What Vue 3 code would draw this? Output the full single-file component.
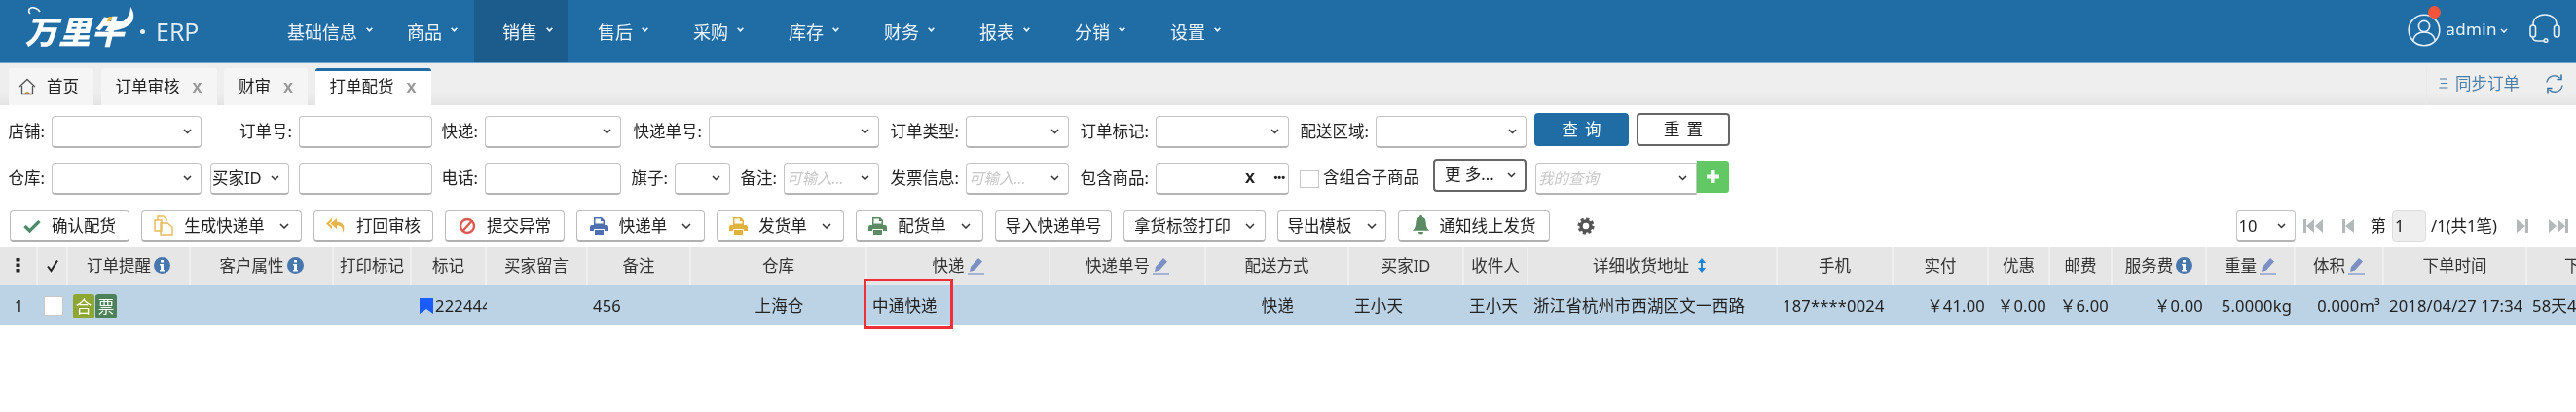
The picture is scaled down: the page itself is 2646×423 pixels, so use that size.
<script setup>
import { computed } from 'vue'

const YEN = '\uFFE5'
const navItems = [
  { t: '基础信息', w: 121 }, { t: '商品', w: 96 }, { t: '销售', w: 96, active: true }, { t: '售后', w: 96 },
  { t: '采购', w: 96 }, { t: '库存', w: 96 }, { t: '财务', w: 96 }, { t: '报表', w: 96 }, { t: '分销', w: 96 }, { t: '设置', w: 96 }
]
const tabs = [
  { t: '订单审核' }, { t: '财审' }, { t: '打单配货', active: true }
]
const row1 = [
  { label: '店铺', lw: 53, w: 154, kind: 'select' },
  { label: '订单号', lw: 100, w: 137, kind: 'input' },
  { label: '快递', lw: 54, w: 140, kind: 'select' },
  { label: '快递单号', lw: 90, w: 175, kind: 'select' },
  { label: '订单类型', lw: 89, w: 106, kind: 'select' },
  { label: '订单标记', lw: 89, w: 137, kind: 'select' },
  { label: '配送区域', lw: 89, w: 155, kind: 'select' }
]
const row2 = [
  { label: '仓库', lw: 53, w: 154, kind: 'select' },
  { label: '', lw: 9, w: 81, kind: 'select', value: '买家ID' },
  { label: '', lw: 10, w: 137, kind: 'input' },
  { label: '电话', lw: 54, w: 140, kind: 'input' },
  { label: '旗子', lw: 55, w: 57, kind: 'select' },
  { label: '备注', lw: 55, w: 98, kind: 'select', ph: '可输入...' },
  { label: '发票信息', lw: 89, w: 106, kind: 'select', ph: '可输入...' },
  { label: '包含商品', lw: 89, w: 137, kind: 'input', picker: true }
]
const tools = [
  { t: '确认配货', w: 123, icon: 'check' },
  { t: '生成快递单', w: 165, icon: 'copy', caret: true },
  { t: '打回审核', w: 123, icon: 'reply' },
  { t: '提交异常', w: 123, icon: 'ban' },
  { t: '快递单', w: 132, icon: 'print', color: '#4f6fb0', caret: true },
  { t: '发货单', w: 131, icon: 'print', color: '#e2b23f', caret: true },
  { t: '配货单', w: 131, icon: 'print', color: '#5b8a63', caret: true },
  { t: '导入快递单号', w: 120 },
  { t: '拿货标签打印', w: 146, caret: true },
  { t: '导出模板', w: 112, caret: true },
  { t: '通知线上发货', w: 156, icon: 'bell' }
]
const columns = [
  { t: 'dots', end: 39, kind: 'index' },
  { t: 'check', end: 70, kind: 'box' },
  { t: '订单提醒', end: 196, icon: 'info', kind: 'badges' },
  { t: '客户属性', end: 343, icon: 'info' },
  { t: '打印标记', end: 423 },
  { t: '标记', end: 500, kind: 'mark', v: '222444' },
  { t: '买家留言', end: 604 },
  { t: '备注', end: 710, v: '456', a: 'left' },
  { t: '仓库', end: 891, v: '上海仓', a: 'center' },
  { t: '快递', end: 1079, icon: 'pen', v: '中通快递', a: 'left' },
  { t: '快递单号', end: 1239, icon: 'pen' },
  { t: '配送方式', end: 1386, v: '快递', a: 'center' },
  { t: '买家ID', end: 1504, v: '王小天', a: 'left' },
  { t: '收件人', end: 1570, v: '王小天', a: 'left' },
  { t: '详细收货地址', end: 1826, icon: 'sort', v: '浙江省杭州市西湖区文一西路', a: 'left' },
  { t: '手机', end: 1945, v: '187****0024', a: 'left' },
  { t: '实付', end: 2043, v: YEN + '41.00', a: 'right' },
  { t: '优惠', end: 2106, v: YEN + '0.00', a: 'right' },
  { t: '邮费', end: 2170, v: YEN + '6.00', a: 'right' },
  { t: '服务费', end: 2267, icon: 'info', v: YEN + '0.00', a: 'right' },
  { t: '重量', end: 2358, icon: 'pen', v: '5.0000kg', a: 'right' },
  { t: '体积', end: 2449, icon: 'pen', v: '0.000m³', a: 'right' },
  { t: '下单时间', end: 2596, v: '2018/04/27 17:34', a: 'left' },
  { t: '下单间隔', end: 2740, v: '58天4小时', a: 'left' }
]
const gridCols = computed(() => {
  let prev = 0
  return columns.map(c => { const w = c.end - prev; prev = c.end; return w + 'px' }).join(' ')
})
</script>

<template>
  <div class="page">
    <header class="top">
      <div class="logo">
        <svg class="logo-art" viewBox="0 0 140 46" width="140" height="46">
          <path d="M31 14c-2-2-2-5 1-6 3-1 7 1 9 4" fill="none" stroke="#fff" stroke-width="1.6" />
          <path d="M108 32c14 0 27-4 29-13 1-5-1-9-3-12 0 7-3 14-12 17l-11 3z" fill="#fff" />
          <path d="M107 22l5-5h6l-5 5z" fill="#e8b23c" />
        </svg>
        <span class="logo-cn">万里牛</span>
        <span class="logo-dot"></span>
        <span class="logo-erp">ERP</span>
      </div>
      <nav class="nav">
        <a v-for="n in navItems" :key="n.t" class="nav-item" :class="{ on: n.active }" :style="{ width: n.w + 'px' }">
          {{ n.t }}
          <svg class="nav-caret" width="7" height="5" viewBox="0 0 7 5"><path d="M.7.8 3.5 3.8 6.3.8" fill="none" stroke="#fff" stroke-width="1.5" /></svg>
        </a>
      </nav>
      <div class="user">
        <span class="avatar">
          <svg width="34" height="34" viewBox="0 0 34 34" fill="none" stroke="#e6eff6" stroke-width="1.6">
            <circle cx="17" cy="17" r="15.8" />
            <circle cx="17" cy="13" r="5.6" />
            <path d="M5.5 27.5c1.5-5.5 6-8.5 11.500-8.500s10 3 11.500 8.500" />
          </svg>
          <i class="dot"></i>
        </span>
        <span class="uname">admin</span>
        <svg class="user-caret" width="8" height="5" viewBox="0 0 8 5"><path d="M1 1l3 3 3-3" fill="none" stroke="#fff" stroke-width="1.5" /></svg>
        <svg class="headset" width="34" height="30" viewBox="0 0 34 30" fill="none" stroke="#e6eff6" stroke-width="1.6">
          <path d="M5 12V11C5 5 10 1 17 1s12 4 12 10v1" />
          <rect x="2" y="12" width="5.500" height="12" rx="2.700" />
          <rect x="26.500" y="12" width="5.500" height="12" rx="2.700" />
          <path d="M4.500 24c0 3 2 4 5 4h7" />
          <circle cx="18" cy="27.500" r="1.800" />
        </svg>
      </div>
    </header>

    <div class="tabbar">
      <div class="tab home">
        <svg width="18" height="18" viewBox="0 0 18 18" fill="none" stroke="#555" stroke-width="1.3">
          <path d="M1 9 9 1.500 17 9" />
          <path d="M3.500 8v8.500h11V8" />
          <path d="M7 16.500c0-2 4-2 4 0" stroke="#b57b3e" />
        </svg>
        <span>首页</span>
      </div>
      <div v-for="t in tabs" :key="t.t" class="tab" :class="{ on: t.active }">
        <span>{{ t.t }}</span><b class="close">x</b>
      </div>
      <div class="tab-tools">
        <span class="sync">
          <svg width="10" height="11" viewBox="0 0 10 11" fill="none" stroke="#4c7fa8" stroke-width="1.200"><path d="M1 1h8M2 5.500h6.500M.5 10h9" /></svg>
          同步订单
        </span>
        <svg class="refresh" width="22" height="22" viewBox="0 0 22 22" fill="none" stroke="#4c7fa8" stroke-width="1.500">
          <path d="M3 9.500A8 8 0 0 1 16.500 5" />
          <path d="M19 12.500A8 8 0 0 1 5.500 17" />
          <path d="M18 1.500v5h-4.500" stroke="#2c6ea4" />
          <path d="M4 20.500v-5h4.500" stroke="#2c6ea4" />
        </svg>
      </div>
    </div>

    <section class="filters">
      <div class="frow first">
        <div v-for="f in row1" :key="f.label" class="field">
          <label class="lbl" :style="{ width: f.lw + 'px' }">{{ f.label ? f.label + ':' : '' }}</label>
          <div class="ctrl" :style="{ width: f.w + 'px' }">
            <svg v-if="f.kind === 'select'" class="chev" width="9" height="6" viewBox="0 0 9 6"><path d="M1 1l3.500 3.500L8 1" fill="none" stroke="#333" stroke-width="1.500" /></svg>
          </div>
        </div>
        <button class="act primary">查询</button>
        <button class="act">重置</button>
      </div>
      <div class="frow second">
        <div v-for="(f, i) in row2" :key="i" class="field">
          <label class="lbl" :style="{ width: f.lw + 'px' }">{{ f.label ? f.label + ':' : '' }}</label>
          <div class="ctrl" :style="{ width: f.w + 'px' }">
            <span v-if="f.value" class="val">{{ f.value }}</span>
            <span v-if="f.ph" class="ph">{{ f.ph }}</span>
            <svg v-if="f.kind === 'select'" class="chev" width="9" height="6" viewBox="0 0 9 6"><path d="M1 1l3.500 3.500L8 1" fill="none" stroke="#333" stroke-width="1.500" /></svg>
            <template v-if="f.picker"><b class="pick-x">x</b><b class="pick-more">•••</b></template>
          </div>
        </div>
        <span class="cbox"></span>
        <span class="sub-lbl">含组合子商品</span>
        <div class="more">
          <span>更 多...</span>
          <svg class="chev" width="9" height="6" viewBox="0 0 9 6"><path d="M1 1l3.500 3.500L8 1" fill="none" stroke="#333" stroke-width="1.500" /></svg>
        </div>
        <div class="ctrl query">
          <span class="ph">我的查询</span>
          <svg class="chev" width="9" height="6" viewBox="0 0 9 6"><path d="M1 1l3.500 3.500L8 1" fill="none" stroke="#333" stroke-width="1.500" /></svg>
        </div>
        <button class="plus"><svg width="15" height="15" viewBox="0 0 15 15"><path d="M7.500 1v13M1 7.500h13" stroke="#fff" stroke-width="4" /></svg></button>
      </div>
    </section>

    <section class="toolbar">
      <button v-for="b in tools" :key="b.t" class="tool" :style="{ width: b.w + 'px' }">
        <svg v-if="b.icon === 'check'" width="18" height="14" viewBox="0 0 18 14"><path d="M1.500 7l5 5L16.500 2" fill="none" stroke="#4f8a6b" stroke-width="3.200" /></svg>
        <svg v-if="b.icon === 'copy'" width="20" height="21" viewBox="0 0 20 21" fill="none" stroke="#e6bb5c" stroke-width="1.400"><path d="M1 5h7l0 11H1zM4 5V1h6l3 3v2" /><path d="M7 8h7l5 4v8H7z" /></svg>
        <svg v-if="b.icon === 'reply'" width="20" height="17" viewBox="0 0 20 17" fill="#e6b64c"><path d="M6 1 0 6.500 6 12V9L3 6.500 6 4z" /><path d="M11 1 4.500 6.500 11 12V8.500c4 0 6 1.500 6.500 7.500 2-6 1-11-6.500-11.500z" /></svg>
        <svg v-if="b.icon === 'ban'" width="18" height="18" viewBox="0 0 18 18" fill="none" stroke="#dc5a50" stroke-width="2.400"><circle cx="9" cy="9" r="7" /><path d="M4.500 14 13.500 4" /></svg>
        <svg v-if="b.icon === 'print'" width="19" height="18" viewBox="0 0 19 18" :fill="b.color"><path d="M4 0h8l3 3v5H4zM5.500 1.500v5h8V4h-2.500V1.500z" fill-rule="evenodd" /><path d="M2 8h15a2 2 0 0 1 2 2v4h-4v-2H4v2H0v-4a2 2 0 0 1 2-2z" /><path d="M5 13h9v5H5z" /></svg>
        <svg v-if="b.icon === 'bell'" width="17" height="21" viewBox="0 0 17 21" fill="#5b8a63"><path d="M8.500 0c1 0 1.500.700 1.500 1.700 3 .9 3.500 3.300 3.700 6 .2 3.500 1 5.500 3.300 8H0c2.300-2.500 3.100-4.500 3.300-8 .2-2.700.7-5.100 3.700-6C7 .7 7.500 0 8.500 0z" /><path d="M6 17h5a2.500 2.500 0 0 1-5 0z" /></svg>
        <span>{{ b.t }}</span>
        <svg v-if="b.caret" class="tool-caret" width="10" height="6" viewBox="0 0 10 6"><path d="M1 1l4 4 4-4" fill="none" stroke="#333" stroke-width="1.500" /></svg>
      </button>
      <svg class="gear" width="18" height="18" viewBox="0 0 18 18" fill="none" stroke="#555">
        <circle cx="9" cy="9" r="5" stroke-width="3.500" />
        <circle cx="9" cy="9" r="7.300" stroke-width="2.600" stroke-dasharray="3.200 2.530" />
      </svg>
      <div class="pager">
        <div class="ctrl size"><span class="val">10</span><svg class="chev" width="9" height="6" viewBox="0 0 9 6"><path d="M1 1l3.500 3.500L8 1" fill="none" stroke="#333" stroke-width="1.500" /></svg></div>
        <svg class="pg first-pg" width="20" height="16" viewBox="0 0 20 16" fill="#b3b8b8"><path d="M0 1h3v14H0zM11 1v14L3 8zM20 1v14l-8-7z" /></svg>
        <svg class="pg prev-pg" width="12" height="16" viewBox="0 0 12 16" fill="#b3b8b8"><path d="M0 1h3v14H0zM12 1v14L3 8z" /></svg>
        <span class="pg-t">第</span>
        <span class="pg-in">1</span>
        <span class="pg-total">/1(共1笔)</span>
        <svg class="pg next-pg" width="12" height="16" viewBox="0 0 12 16" fill="#b3b8b8"><path d="M12 1H9v14h3zM0 1v14l9-7z" /></svg>
        <svg class="pg last-pg" width="20" height="16" viewBox="0 0 20 16" fill="#b3b8b8"><path d="M20 1h-3v14h3zM9 1v14l8-7zM0 1v14l8-7z" /></svg>
      </div>
    </section>

    <section class="table">
      <div class="thead" :style="{ gridTemplateColumns: gridCols }">
        <div v-for="c in columns" :key="c.t" class="th">
          <svg v-if="c.t === 'dots'" width="5" height="15" viewBox="0 0 5 15" fill="#222"><rect x="0.500" y="0" width="4" height="3.500" /><rect x="0.500" y="5.500" width="4" height="3.500" /><rect x="0.500" y="11" width="4" height="3.500" /></svg>
          <svg v-else-if="c.t === 'check'" width="14" height="14" viewBox="0 0 14 14"><path d="M2 7.500 5.500 12 12 1.500" fill="none" stroke="#222" stroke-width="2" /></svg>
          <template v-else>
            <span>{{ c.t }}</span>
            <svg v-if="c.icon === 'info'" class="ic" width="17" height="17" viewBox="0 0 17 17"><circle cx="8.500" cy="8.500" r="8.500" fill="#4877ad" /><rect x="7" y="3" width="3" height="2.500" fill="#fff" /><path d="M6 7h4v6h1v1.500H6V13h1V8.500H6z" fill="#fff" /></svg>
            <svg v-if="c.icon === 'pen'" class="ic" width="17" height="18" viewBox="0 0 17 18"><path d="M11 1l4 3.500-8 9-5 1.500 1-5z" fill="#7a8fc4" /><path d="M0 17h17" stroke="#8aa0d0" stroke-width="1.500" /></svg>
            <svg v-if="c.icon === 'sort'" class="ic sort" width="8" height="15" viewBox="0 0 8 15" fill="#1f84d6"><path d="M4 0l4 5H5v5h3l-4 5-4-5h3V5H0z" /></svg>
          </template>
        </div>
      </div>
      <div class="trow" :style="{ gridTemplateColumns: gridCols }">
        <div v-for="c in columns" :key="c.t" class="td" :class="c.a">
          <span v-if="c.kind === 'index'">1</span>
          <span v-else-if="c.kind === 'box'" class="rowbox"></span>
          <template v-else-if="c.kind === 'badges'">
            <span class="badge he">合</span><span class="badge piao">票</span>
          </template>
          <template v-else-if="c.kind === 'mark'">
            <svg class="mark" width="14" height="16" viewBox="0 0 14 16" fill="#1a5cff"><path d="M0 0h14v16l-7-5-7 5z" /></svg>
            <span class="mark-v">{{ c.v }}</span>
          </template>
          <span v-else-if="c.v">{{ c.v }}</span>
        </div>
      </div>
      <div class="hilite"></div>
    </section>
  </div>
</template>

<style scoped>
.page {
  width: 2646px;
  height: 423px;
  overflow: hidden;
  background: #fff;
  color: #222;
  font: 16.500px/1.2 "Noto Sans", "Noto Sans CJK SC", sans-serif;
  filter: blur(0.35px);
}
.top {
  height: 65px;
  background: #206ca4;
  border-bottom: 1px solid #6ea3c9;
  box-sizing: border-box;
  display: flex;
  color: #eef4f9;
}
.logo {
  width: 266px;
  flex: none;
  position: relative;
  display: flex;
}
.logo-art { position: absolute; left: 0; top: 0; }
.logo-cn {
  position: absolute;
  left: 26px;
  top: 11px;
  font-size: 33px;
  line-height: 40px;
  font-weight: 900;
  font-style: italic;
  color: #fff;
  letter-spacing: 1px;
  font-family: "Noto Sans CJK SC", sans-serif;
  white-space: nowrap;
}
.logo-dot {
  position: absolute;
  left: 144px;
  top: 30px;
  width: 5px;
  height: 5px;
  border-radius: 50%;
  background: #e8f0f6;
}
.logo-erp {
  position: absolute;
  left: 160px;
  top: 14px;
  font: 25px/36px "Open Sans", sans-serif;
  color: #e3edf5;
}
.nav { display: flex; }
.nav-item {
  box-sizing: border-box;
  height: 64px;
  margin-right: 2px;
  padding: 22px 0 0 29px;
  font-size: 18px;
  line-height: 22px;
  white-space: nowrap;
}
.nav-item.on { background: #1c5c8d; }
.nav-caret { margin: 0 0 10px 4px; vertical-align: middle; }
.user {
  margin-left: auto;
  display: flex;
  align-items: center;
  height: 64px;
  padding-right: 15px;
}
.avatar { position: relative; display: block; width: 34px; height: 34px; margin-right: 5px; margin-top: -3px; }
.avatar svg { display: block; }
.dot {
  position: absolute;
  left: 21px;
  top: -8px;
  width: 13px;
  height: 13px;
  border-radius: 50%;
  background: #f4553a;
}
.uname { font-size: 17px; letter-spacing: .4px; margin-top: -4px; }
.user-caret { margin: -2px 0 0 3px; }
.headset { margin: -6px 0 0 21px; }

.tabbar {
  height: 43px;
  box-sizing: border-box;
  padding: 5px 0 0 9px;
  display: flex;
  background: linear-gradient(#eeeeee 70%, #e4e4e4);
  font-size: 16.500px;
}
.tab {
  height: 38px;
  box-sizing: border-box;
  background: #f5f5f5;
  border-radius: 3px 3px 0 0;
  padding: 0 15px;
  margin-right: 7.500px;
  display: flex;
  align-items: center;
  white-space: nowrap;
}
.tab.home { width: 87px; padding-left: 10px; gap: 11px; }
.tab.on { background: #fff; border-top: 3px solid #206ca4; padding-bottom: 3px; }
.close { margin-left: 13px; width: 10px; color: #999; font-family: "Liberation Sans", sans-serif; font-size: 18px; line-height: 18px; }
.tab-tools {
  margin-left: auto;
  width: 154px;
  box-sizing: border-box;
  border-left: 1px solid #e9e9e9;
  display: flex;
  align-items: center;
  padding: 0 11px 6px 12px;
  justify-content: space-between;
}
.sync { color: #4c7fa8; display: flex; align-items: center; gap: 7px; white-space: nowrap; }

.filters { height: 108px; box-sizing: border-box; padding-top: 8px; }
.frow { display: flex; align-items: flex-start; }
.frow.first { height: 34px; margin-bottom: 13px; }
.frow.second { height: 37px; }
.field { display: flex; }
.first .field { margin-top: 3px; }
.second .field { margin-top: 4px; }
.lbl {
  box-sizing: border-box;
  height: 32px;
  line-height: 32px;
  text-align: right;
  padding-right: 7px;
  white-space: nowrap;
  flex: none;
}
.ctrl {
  position: relative;
  box-sizing: border-box;
  height: 33px;
  flex: none;
  border: 1.500px solid #c4c4c4;
  border-bottom: 2px solid #b5b5b5;
  border-radius: 4px;
  background: #fff;
  display: flex;
  align-items: center;
}
.chev { position: absolute; right: 9px; top: 50%; margin-top: -3px; }
.val { padding-left: 1px; white-space: nowrap; }
.ph { padding-left: 2px; color: #c8c8c8; font-style: italic; font-size: 15.500px; white-space: nowrap; }
.pick-x { position: absolute; right: 34px; font-family: "Liberation Sans", sans-serif; color: #222; font-size: 18px; }
.pick-more { position: absolute; right: 3px; color: #222; font-size: 11px; letter-spacing: 0; font-family: "Liberation Sans", sans-serif; }
.act {
  box-sizing: border-box;
  width: 96px;
  height: 34px;
  margin-left: 8px;
  border: 2px solid #666;
  border-radius: 4px;
  background: #fff;
  color: #222;
  font: inherit;
  letter-spacing: 7px;
  text-indent: 7px;
  padding: 0;
}
.act.primary { width: 97px; background: #206ca4; border-color: #206ca4; color: #fff; }
.cbox {
  box-sizing: border-box;
  width: 20px;
  height: 18px;
  margin: 12px 0 0 11px;
  flex: none;
  border: 1.500px solid #c8c8c8;
  background: #fff;
}
.sub-lbl { width: 113px; margin: 9px 0 0 4px; padding-left: 0; white-space: nowrap; flex: none; }
.more {
  position: relative;
  box-sizing: border-box;
  width: 96px;
  height: 34px;
  flex: none;
  padding-left: 10px;
  border: 2px solid #666;
  border-radius: 4px;
  line-height: 28px;
  white-space: nowrap;
}
.ctrl.query { width: 166px; margin: 4px 0 0 9px; border-radius: 4px 0 0 4px; }
.plus {
  width: 33px;
  height: 33px;
  margin-top: 2px;
  padding: 0;
  border: 0;
  border-radius: 0 3px 3px 0;
  background: #62c864;
  display: flex;
  align-items: center;
  justify-content: center;
}

.toolbar { height: 32px; padding-left: 10px; display: flex; align-items: center; gap: 12px; }
.tool {
  box-sizing: border-box;
  height: 32px;
  padding: 0;
  flex: none;
  border: 1.500px solid #bdbdbd;
  border-bottom: 2px solid #b0b0b0;
  border-radius: 4px;
  background: #fff;
  color: #222;
  font: inherit;
  white-space: nowrap;
  display: flex;
  align-items: center;
  justify-content: center;
  gap: 11px;
}
.tool-caret { margin-left: 4px; }
.gear { margin-left: 16px; flex: none; }
.pager { margin-left: auto; display: flex; align-items: center; height: 32px; padding-right: 8px; }
.ctrl.size { width: 61px; height: 32px; }
.ctrl.size .val { padding-left: 2px; }
.pg { flex: none; }
.first-pg { margin-left: 8px; }
.prev-pg { margin-left: 20px; }
.pg-t { margin-left: 17px; }
.pg-in {
  box-sizing: border-box;
  width: 35px;
  height: 32px;
  margin-left: 6px;
  padding-left: 2px;
  line-height: 30px;
  background: #eee;
  border: 1px solid #ddd;
  border-radius: 4px;
}
.pg-total { margin-left: 5px; width: 88px; white-space: nowrap; }
.next-pg { margin-left: 0; }
.last-pg { margin-left: 21px; }

.table { position: relative; margin-top: 6px; }
.thead { display: grid; height: 39px; background: #e6e6e6; }
.th {
  display: flex;
  align-items: center;
  justify-content: center;
  gap: 1px;
  border-right: 2px solid #efefef;
  white-space: nowrap;
  overflow: hidden;
  padding-bottom: 2px;
  box-sizing: border-box;
  color: #333;
}
.ic { margin-left: 2px; flex: none; }
.ic.sort { margin: 0 6px 0 8px; }
.trow { display: grid; height: 41px; background: #bcd3e6; margin-top: 0; }
.td {
  display: flex;
  align-items: center;
  justify-content: center;
  white-space: nowrap;
  overflow: hidden;
  padding: 1px 5px 0;
  box-sizing: border-box;
  letter-spacing: .2px;
}
.td.left { justify-content: flex-start; }
.td.right { justify-content: flex-end; padding-right: 4px; }
.td.center { justify-content: center; }
.rowbox {
  box-sizing: border-box;
  width: 20px;
  height: 20px;
  background: #fff;
  border: 1.500px solid #c8c8c8;
  margin-left: 1px;
}
.badge {
  box-sizing: border-box;
  width: 22px;
  height: 25px;
  margin-right: 1px;
  border-radius: 3px;
  color: #fff;
  text-align: center;
  line-height: 25px;
}
.he { background: #8ea632; }
.piao { background: #4d8158; }
.mark { margin-left: -3px; flex: none; }
.mark-v { margin-left: 2px; }
.td:has(.mark) { justify-content: flex-start; padding-left: 11px; padding-right: 0; }
.td:has(.badge) { justify-content: flex-start; padding-left: 5px; }
.hilite {
  position: absolute;
  left: 887px;
  top: 32px;
  width: 92px;
  height: 52px;
  box-sizing: border-box;
  border: 3px solid #f02f38;
}
</style>

<style>
html, body { margin: 0; background: #fff; overflow: hidden; }
</style>
